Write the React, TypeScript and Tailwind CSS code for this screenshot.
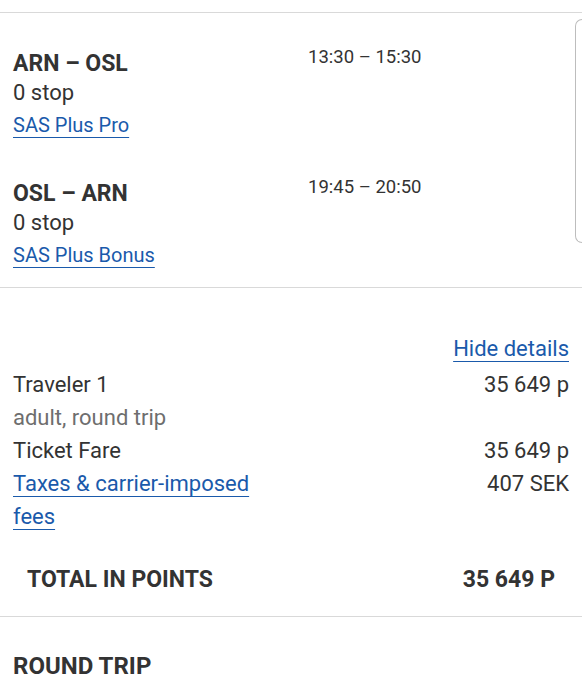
import React from 'react';

const flights = [
  { route: 'ARN – OSL', stops: '0 stop', fare: 'SAS Plus Pro', time: '13:30 – 15:30' },
  { route: 'OSL – ARN', stops: '0 stop', fare: 'SAS Plus Bonus', time: '19:45 – 20:50' },
];

function Link({ children }: { children: React.ReactNode }) {
  return (
    <a href="#" className="text-[#1a5aab] underline decoration-1 underline-offset-[5px]">
      {children}
    </a>
  );
}

function PriceRow({ label, value, muted }: { label: React.ReactNode; value?: string; muted?: boolean }) {
  return (
    <div className="flex items-start justify-between">
      <div className={muted ? 'w-[250px] text-[#6e6e6e]' : 'w-[250px]'}>{label}</div>
      {value && <div>{value}</div>}
    </div>
  );
}

export default function App() {
  return (
    <main
      className="min-h-screen w-[582px] overflow-hidden bg-white text-[22px] leading-[33px] text-[#333]"
      style={{ fontFamily: 'Roboto, "Liberation Sans", sans-serif' }}
    >
      <div className="h-3" />

      {/* flights */}
      <section className="flex border-t border-[#d9d9d9]">
        <div className="flex flex-1 flex-col gap-[38px] pb-[15px] pl-[13px] pt-[37px]">
          {flights.map((f) => (
            <div key={f.route} className="flex items-start">
              <div className="w-[295px]">
                <div className="text-[23px] font-bold leading-[28px]">{f.route}</div>
                <div className="leading-[30px]">{f.stops}</div>
                <div className="text-[20px] leading-[34px]">
                  <Link>{f.fare}</Link>
                </div>
              </div>
              <div className="text-[18.5px] leading-[14px]">{f.time}</div>
            </div>
          ))}
        </div>
        <div className="mb-[44px] mt-[6px] w-[7px] shrink-0 rounded-l-lg border border-r-0 border-[#bdbdbd]" />
      </section>

      {/* price details */}
      <section className="border-t border-[#d9d9d9] px-[13px] pb-5 pt-[44px]">
        <div className="flex h-9 justify-end">
          <Link>Hide details</Link>
        </div>
        <PriceRow label="Traveler 1" value="35 649 p" />
        <PriceRow label="adult, round trip" muted />
        <PriceRow label="Ticket Fare" value="35 649 p" />
        <PriceRow label={<Link>Taxes &amp; carrier-imposed fees</Link>} value="407 SEK" />
        <div className="mt-[30px] flex justify-between px-[14px] text-[23px] font-bold">
          <span>TOTAL IN POINTS</span>
          <span>35 649 P</span>
        </div>
      </section>

      <section className="border-t border-[#d9d9d9] px-[13px] pt-[33px]">
        <h2 className="text-[24px] font-bold">ROUND TRIP</h2>
      </section>
    </main>
  );
}
